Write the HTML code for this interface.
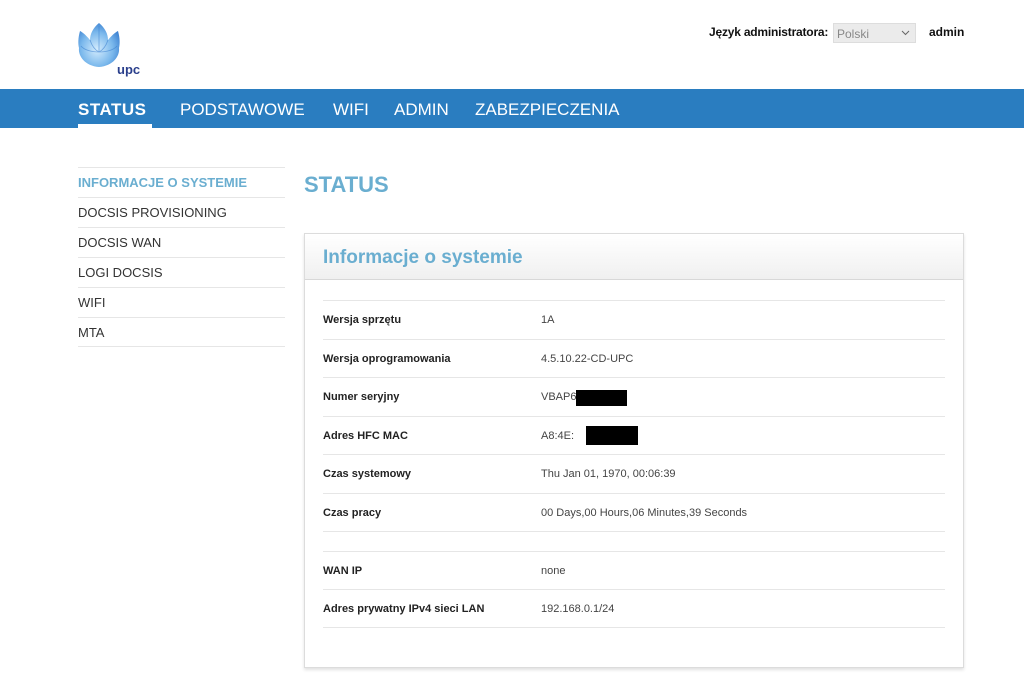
<!DOCTYPE html>
<html><head><meta charset="utf-8"><style>
*{margin:0;padding:0;box-sizing:border-box}
body{width:1024px;height:693px;background:#fff;font-family:"Liberation Sans",Arial,sans-serif;position:relative;overflow:hidden}
.abs{position:absolute}
.nav{top:89px;left:0;width:1024px;height:39px;background:#2a7dc0}
.nav span{position:absolute;top:11px;color:#fff;font-size:17px}
.side{left:78px;width:207px}
.side div{height:30px;border-top:1px solid #e6e6e6;font-size:13px;color:#333;line-height:30px;}
.panel{left:304px;top:233px;width:660px;height:435px;border:1px solid #dcdcdc;box-shadow:0 2px 3px rgba(0,0,0,.12)}
.ph{height:46px;background:linear-gradient(#fff,#f0f0f0);border-bottom:1px solid #d8d8d8;color:#6aaed0;font-size:19px;font-weight:bold;padding:13px 0 0 18px}
.row{position:absolute;left:18px;width:622px;border-top:1px solid #e6e6e6;font-size:11px;height:39px}
.row b{position:absolute;left:0;top:13px;color:#222}
.row i{position:absolute;left:218px;top:13px;font-style:normal;color:#444}
.blk{position:absolute;background:#000}
</style></head><body>
<svg class="abs" style="left:77px;top:22px" width="44" height="46" viewBox="0 0 44 46">
<defs><radialGradient id="g" cx="45%" cy="60%" r="65%"><stop offset="0" stop-color="#d4ecfd"/><stop offset=".6" stop-color="#7ab8ec"/><stop offset="1" stop-color="#3a7fd0"/></radialGradient></defs>
<path d="M22 1 C16 6 13 12 13 18 C8 12 5 10 3 9 C1 16 1 22 2 26 C1 34 8 44 22 45 C36 44 43 34 42 26 C43 22 43 16 41 9 C39 10 36 12 31 18 C31 12 28 6 22 1Z" fill="url(#g)"/>
<path d="M22 4 L22 30 M13 18 C15 24 18 28 22 30 C26 28 29 24 31 18 M4 24 C10 32 34 32 40 24" stroke="#3b7fcf" stroke-width=".8" fill="none" opacity=".6"/>
</svg>
<div class="abs" style="left:117px;top:62px;font-size:13px;font-weight:bold;color:#2a3f8c">upc</div>
<div class="abs" style="left:709px;top:25px;font-size:12px;font-weight:bold;color:#111;letter-spacing:-.2px">Język administratora:</div>
<div class="abs" style="left:833px;top:23px;width:83px;height:20px;background:#ebebeb;border:1px solid #ddd;font-size:12px;color:#888;padding:3px 0 0 3px">Polski<svg style="position:absolute;right:5px;top:6px" width="9" height="6"><path d="M1 1 L4.5 4.5 L8 1" stroke="#666" fill="none"/></svg></div>
<div class="abs" style="left:929px;top:25px;font-size:12px;font-weight:bold;color:#111">admin</div>
<div class="abs nav">
<span style="left:78px;font-weight:bold;font-size:17px;letter-spacing:.5px">STATUS</span>
<div class="abs" style="left:78px;top:35px;width:74px;height:4px;background:#fff"></div>
<span style="left:180px">PODSTAWOWE</span><span style="left:333px">WIFI</span><span style="left:394px">ADMIN</span><span style="left:475px">ZABEZPIECZENIA</span>
</div>
<div class="abs side" style="top:167px">
<div style="color:#6aaed0;font-weight:bold">INFORMACJE O SYSTEMIE</div>
<div>DOCSIS PROVISIONING</div><div>DOCSIS WAN</div><div>LOGI DOCSIS</div><div>WIFI</div>
<div style="border-bottom:1px solid #e6e6e6">MTA</div></div>
<div class="abs" style="left:304px;top:172px;font-size:22px;font-weight:bold;color:#6aaed0">STATUS</div>
<div class="abs panel"><div class="ph">Informacje o systemie</div>
<div class="row" style="top:66px"><b>Wersja sprzętu</b><i>1A</i></div>
<div class="row" style="top:105px"><b>Wersja oprogramowania</b><i>4.5.10.22-CD-UPC</i></div>
<div class="row" style="top:143px"><b>Numer seryjny</b><i>VBAP6</i><div class="blk" style="left:253px;top:12px;width:51px;height:16px"></div></div>
<div class="row" style="top:182px"><b>Adres HFC MAC</b><i>A8:4E:</i><div class="blk" style="left:263px;top:9px;width:52px;height:19px"></div></div>
<div class="row" style="top:220px"><b>Czas systemowy</b><i>Thu Jan 01, 1970, 00:06:39</i></div>
<div class="row" style="top:259px"><b>Czas pracy</b><i>00 Days,00 Hours,06 Minutes,39 Seconds</i></div>
<div class="row" style="top:297px;height:20px"></div>
<div class="row" style="top:317px"><b>WAN IP</b><i>none</i></div>
<div class="row" style="top:355px;border-bottom:1px solid #e6e6e6"><b>Adres prywatny IPv4 sieci LAN</b><i>192.168.0.1/24</i></div>
</div>
</body></html>
